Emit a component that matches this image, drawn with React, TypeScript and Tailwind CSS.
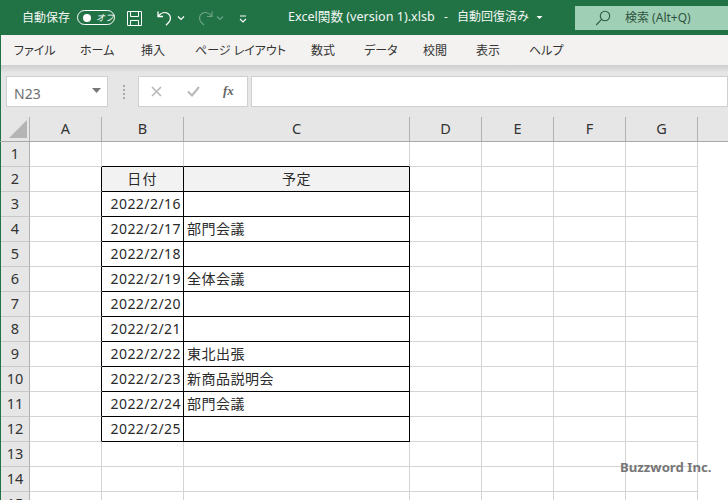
const jp = { fontFamily: '"Noto Sans", "Noto Sans CJK JP", sans-serif' };

const tabs: [string, string][] = [
  ["ファイル", "w-[66px]"],
  ["ホーム", "w-[61px]"],
  ["挿入", "w-[54px]"],
  ["ページ レイアウト", "w-[116px]"],
  ["数式", "w-[53px]"],
  ["データ", "w-[59px]"],
  ["校閲", "w-[53px]"],
  ["表示", "w-[53px]"],
  ["ヘルプ", "w-[60px]"],
];

const cols: [string, string][] = [
  ["A", "w-[72px]"],
  ["B", "w-[82px]"],
  ["C", "w-[226px]"],
  ["D", "w-[72px]"],
  ["E", "w-[72px]"],
  ["F", "w-[72px]"],
  ["G", "w-[72px]"],
  ["", "w-[72px]"],
];

const rows: Record<number, [string, string]> = {
  2: ["日付", "予定"],
  3: ["2022/2/16", ""],
  4: ["2022/2/17", "部門会議"],
  5: ["2022/2/18", ""],
  6: ["2022/2/19", "全体会議"],
  7: ["2022/2/20", ""],
  8: ["2022/2/21", ""],
  9: ["2022/2/22", "東北出張"],
  10: ["2022/2/23", "新商品説明会"],
  11: ["2022/2/24", "部門会議"],
  12: ["2022/2/25", ""],
};

function Row({ n }: { n: number }) {
  const data = rows[n];
  const isHead = n === 2;
  const inTable = !!data;
  const aboveTable = n === 1;
  const bottom = inTable || aboveTable ? "border-b-black" : "border-b-[#d4d4d4]";
  return (
    <div className="flex h-[25px] shrink-0">
      <div className="w-[29px] shrink-0 flex items-center justify-center bg-[#e6e6e6] border-r border-r-[#b1b1b1] border-b border-b-[#c8c8c8] text-[14.5px] text-[#333]">
        {n}
      </div>
      <div className={`w-[72px] shrink-0 border-r border-b border-b-[#d4d4d4] ${inTable ? "border-r-black" : "border-r-[#d4d4d4]"}`} />
      <div
        className={`w-[82px] shrink-0 border-b flex items-center pb-px whitespace-nowrap text-[14px] text-[#2a2a2a] ${bottom} ${inTable ? "border-r border-r-black" : "border-r border-r-[#d4d4d4]"} ${isHead ? "bg-[#f2f2f2] justify-center" : "justify-end pr-[2px]"}`}
      >
        {data && <span className={isHead ? "tracking-[1.2px]" : "tracking-[0.45px]"}>{data[0]}</span>}
      </div>
      <div
        className={`w-[226px] shrink-0 border-b flex items-center pb-px whitespace-nowrap text-[14px] text-[#2a2a2a] ${bottom} ${inTable ? "border-r border-r-black" : "border-r border-r-[#d4d4d4]"} ${isHead ? "bg-[#f2f2f2] justify-center" : "pl-[3px]"}`}
      >
        {data && <span className="tracking-[0.5px]">{data[1]}</span>}
      </div>
      {[0, 1, 2, 3].map((i) => (
        <div key={i} className="w-[72px] shrink-0 border-r border-r-[#d4d4d4] border-b border-b-[#d4d4d4]" />
      ))}
    </div>
  );
}

export default function App() {
  return (
    <div className="relative w-[728px] h-[500px] overflow-hidden bg-white flex flex-col" style={jp}>
      {/* Title bar */}
      <div className="h-[35px] shrink-0 bg-[#217346] text-white flex items-start">
        <span className="ml-[22px] mt-[9px] w-[48px] text-[12px] leading-[18px] text-[#f2f7f4] whitespace-nowrap">自動保存</span>
        <div className="ml-[7px] mt-[10px] w-[38px] h-[15px] rounded-full border border-white flex items-center">
          <span className="ml-[5px] w-[8px] h-[8px] rounded-full bg-white" />
          <span className="ml-[5px] text-[9px] leading-none italic">オフ</span>
        </div>
        <svg className="ml-[11px] mt-[10px]" width="17" height="17" viewBox="0 0 17 17" fill="none" stroke="#fff" strokeWidth="1">
          <path d="M1.5 1.5h14v14h-14z" />
          <path d="M4.5 1.5v5h8v-5M4.5 15.5v-5h8v5" />
        </svg>
        <svg className="ml-[13px] mt-[9px]" width="18" height="18" viewBox="0 0 18 18" fill="none" stroke="#fff" strokeWidth="1.3">
          <path d="M2 2.5v5h5" />
          <path d="M2.5 7C5 3.5 9 2.8 12 4.5c3 2 3.2 6 1 8.5l-3 3.2" />
        </svg>
        <svg className="ml-[3px] mt-[15px]" width="8" height="6" viewBox="0 0 8 6" fill="none" stroke="#fff" strokeWidth="1.2">
          <path d="M1 1.5l3 3 3-3" />
        </svg>
        <svg className="ml-[11px] mt-[9px]" width="18" height="18" viewBox="0 0 18 18" fill="none" stroke="#6aa386" strokeWidth="1.2">
          <path d="M16 2.5v5h-5" />
          <path d="M15.5 7C13 3.5 9 2.8 6 4.5c-3 2-3.2 6-1 8.5l3 3.2" />
        </svg>
        <svg className="ml-[2px] mt-[15px]" width="8" height="6" viewBox="0 0 8 6" fill="none" stroke="#6aa386" strokeWidth="1.2">
          <path d="M1 1.5l3 3 3-3" />
        </svg>
        <svg className="ml-[14px] mt-[15px]" width="10" height="8" viewBox="0 0 10 8" fill="none" stroke="#fff" strokeWidth="1.1">
          <path d="M2 1h6M2 4l3 3 3-3" />
        </svg>
        <span className="ml-[40px] mt-[8px] leading-[18px] text-[#f2f7f4] whitespace-nowrap w-[248px] flex">
          <span className="text-[12.6px] w-[156px]">Excel関数 (version 1).xlsb</span>
          <span className="text-[12px] w-[13px]">-</span>
          <span className="text-[12px]">自動回復済み</span>
        </span>
        <svg className="mt-[15px]" width="7" height="5" viewBox="0 0 7 5" fill="#fff">
          <path d="M0.5 1h6L3.5 4z" />
        </svg>
        <div className="ml-[32px] mt-[6px] flex-1 h-[24px] bg-[#9fcfb4] flex items-center">
          <svg className="ml-[20px]" width="16" height="16" viewBox="0 0 16 16" fill="none" stroke="#2c5a43" strokeWidth="1.1">
            <circle cx="10" cy="6" r="4.7" />
            <path d="M6.6 9.4L1.2 15" />
          </svg>
          <span className="ml-[14px] text-[12px] text-[#2f5542] whitespace-nowrap">検索 (Alt+Q)</span>
        </div>
      </div>

      {/* Ribbon tabs */}
      <div className="h-[30px] shrink-0 bg-[#f3f2f1] border-l border-l-[#217346] flex items-center pl-[13px] pt-[2px] text-[12px] text-[#333] [font-feature-settings:'palt']">
        {tabs.map(([t, w]) => (
          <span key={t} className={`${w} shrink-0 whitespace-nowrap`}>
            {t}
          </span>
        ))}
      </div>

      {/* Formula bar */}
      <div className="h-[52px] shrink-0 border-l border-l-[#217346] bg-gradient-to-b from-[#cfcfcf] via-[#e6e6e6] via-[15%] to-[#e6e6e6] flex items-start pt-[11px]">
        <div className="ml-[5px] w-[102px] h-[31px] bg-white border border-[#d0d0d0] flex items-center justify-between pl-[7px] pr-[6px] pt-[3px] text-[14px] text-[#6e6e6e]">
          N23
          <svg className="-mt-[5px]" width="9" height="5" viewBox="0 0 9 5" fill="#777">
            <path d="M0 0h9L4.5 5z" />
          </svg>
        </div>
        <div className="ml-[15px] mt-[9px] flex flex-col gap-[2px]">
          <span className="w-[2px] h-[2px] bg-[#aaa]" />
          <span className="w-[2px] h-[2px] bg-[#aaa]" />
          <span className="w-[2px] h-[2px] bg-[#aaa]" />
          <span className="w-[2px] h-[2px] bg-[#aaa]" />
        </div>
        <div className="ml-[13px] w-[110px] h-[31px] bg-white border border-[#d0d0d0] flex items-center">
          <svg className="ml-[12px]" width="11" height="11" viewBox="0 0 11 11" fill="none" stroke="#b8b8b8" strokeWidth="1.6">
            <path d="M1 1l9 9M10 1L1 10" />
          </svg>
          <svg className="ml-[25px]" width="13" height="11" viewBox="0 0 13 11" fill="none" stroke="#b8b8b8" strokeWidth="2">
            <path d="M1 5.5l4 4 7-8.5" />
          </svg>
          <span className="ml-[23px] -mt-[2px] text-[13px] italic font-bold text-[#666]" style={{ fontFamily: '"Liberation Serif", serif' }}>
            fx
          </span>
        </div>
        <div className="ml-[3px] flex-1 h-[31px] bg-white border border-[#d0d0d0]" />
      </div>

      {/* Column headers */}
      <div className="flex h-[25px] shrink-0 bg-[#e6e6e6] border-b border-b-[#a8a8a8] text-[14.5px] text-[#333]">
        <div className="w-[30px] shrink-0 border-r border-r-[#b1b1b1] relative border-l border-l-[#217346]">
          <svg className="absolute left-[8px] top-[3px]" width="18" height="18" viewBox="0 0 18 18" fill="#b4b4b4">
            <path d="M18 0v18H0z" />
          </svg>
        </div>
        {cols.map(([c, w], i) => (
          <div key={i} className={`${w} shrink-0 flex items-center justify-center border-r border-r-[#b1b1b1]`}>
            {c}
          </div>
        ))}
      </div>

      {/* Sheet */}
      <div className="flex-1 overflow-hidden border-l border-l-[#217346] flex flex-col">
        {Array.from({ length: 15 }, (_, i) => (
          <Row key={i} n={i + 1} />
        ))}
      </div>

      <span
        className="absolute left-[620px] top-[458px] text-[13.2px] font-bold text-[#777] whitespace-nowrap"
        style={{ fontFamily: '"Noto Sans", sans-serif' }}
      >
        Buzzword Inc.
      </span>
    </div>
  );
}
